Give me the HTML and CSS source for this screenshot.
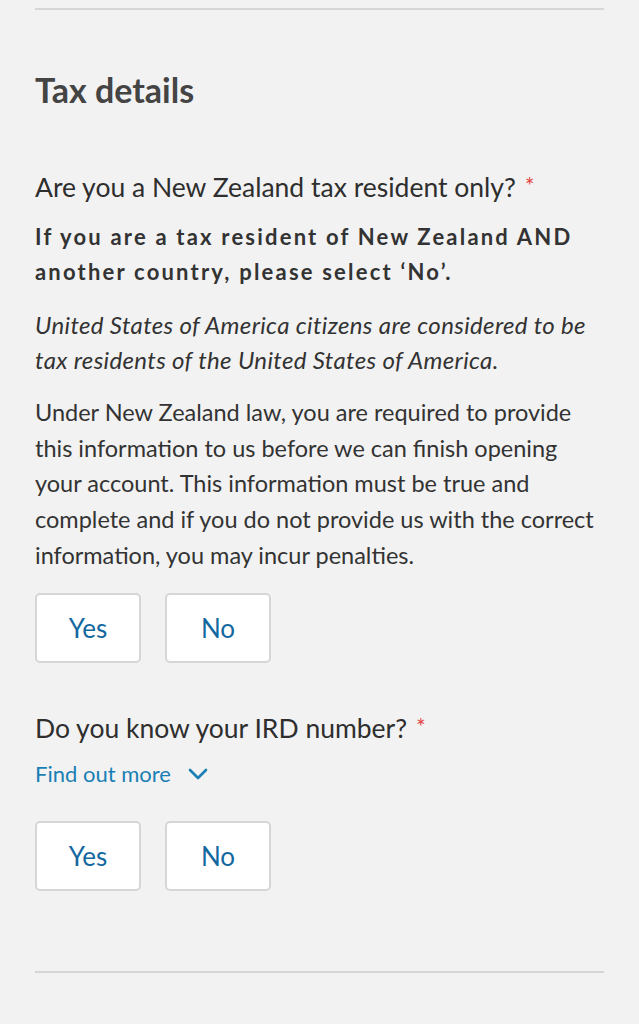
FILE: index.html
```html
<!DOCTYPE html>
<html>
<head>
<meta charset="utf-8">
<link rel="stylesheet" href="styles.css">
</head>
<body>
<div class="page">
  <div class="rule rule-top"></div>
  <h2 class="heading">Tax details</h2>

  <div class="field">
    <p class="question">Are you a New Zealand tax resident only? <span class="req">*</span></p>
    <p class="note-bold">If you are a tax resident of New Zealand AND another country, please select ‘No’.</p>
    <p class="note-italic">United States of America citizens are considered to be tax residents of the United States of America.</p>
    <p class="body-text">Under New Zealand law, you are required to provide this information to us before we can finish opening your account. This information must be true and complete and if you do not provide us with the correct information, you may incur penalties.</p>
    <div class="choices">
      <button class="choice">Yes</button>
      <button class="choice">No</button>
    </div>
  </div>

  <div class="field field-2">
    <p class="question">Do you know your IRD number? <span class="req">*</span></p>
    <a class="more">Find out more
      <svg class="chev" width="20" height="12" viewBox="0 0 20 12"><path d="M2 2 L10 10 L18 2" fill="none" stroke="#1a7fb5" stroke-width="2.6" stroke-linecap="round" stroke-linejoin="round"/></svg>
    </a>
    <div class="choices choices-2">
      <button class="choice">Yes</button>
      <button class="choice">No</button>
    </div>
  </div>

  <div class="rule rule-bottom"></div>
</div>
</body>
</html>
```
FILE: styles.css
```css
html, body {
  margin: 0;
  padding: 0;
  background: #f2f2f2;
}
body {
  font-family: "Lato", "Open Sans", sans-serif;
  color: #333;
  height: 1024px;
  overflow: hidden;
}
.page {
  padding: 8px 35px 0 35px;
}
.rule {
  height: 2px;
  background: #d6d6d6;
}
.heading {
  margin: 60px 0 0 0;
  font-size: 34px;
  line-height: 40px;
  font-weight: 700;
  color: #444;
}
.field p {
  margin: 0;
}
.question {
  margin-top: 58px !important;
  font-size: 26.5px;
  line-height: 34px;
  color: #2e2e2e;
}
.req {
  color: #e54848;
  font-size: 23px;
  vertical-align: 3px;
  margin-left: 2px;
}
.note-bold {
  margin-top: 15px !important;
  font-size: 22px;
  line-height: 35px;
  font-weight: 700;
  letter-spacing: 2.2px;
  color: #333;
}
.note-italic {
  margin-top: 18px !important;
  font-size: 24px;
  line-height: 35px;
  font-style: italic;
  letter-spacing: 0.35px;
  color: #333;
}
.body-text {
  margin-top: 18px !important;
  font-size: 23.5px;
  line-height: 35.7px;
  color: #333;
}
.choices {
  display: flex;
  gap: 24px;
  margin-top: 19px;
}
.choice {
  width: 106px;
  height: 70px;
  background: #fff;
  border: 2px solid #d6d6d6;
  border-radius: 5px;
  font-family: inherit;
  font-size: 26px;
  color: #1468a0;
  padding: 0;
}
.field-2 .question {
  margin-top: 46px !important;
}
.more {
  display: flex;
  align-items: center;
  gap: 17px;
  margin-top: 15px;
  font-size: 22px;
  line-height: 28px;
  color: #1a7fb5;
}
.choices-2 {
  margin-top: 33px;
}
.rule-bottom {
  margin-top: 80px;
}
```
